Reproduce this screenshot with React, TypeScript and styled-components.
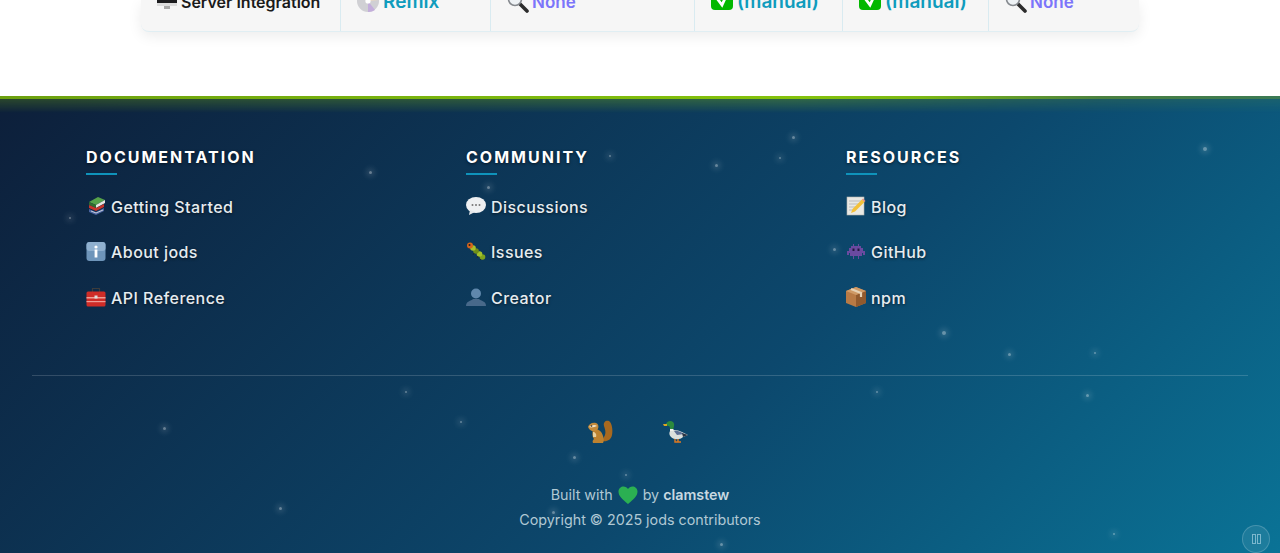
import React from "react";
import styled, { createGlobalStyle } from "styled-components";

const Global = createGlobalStyle`
  html, body { margin: 0; padding: 0; background: #fff; overflow: hidden; height: 553px; }
  body { font-family: Inter, "Liberation Sans", sans-serif; }
`;
const Page = styled.div`height: 553px; overflow: hidden; display: flex; flex-direction: column;`;
const TopArea = styled.div`height: 96px; flex: none; overflow: hidden; display: flex; flex-direction: column; padding: 0 141px; box-sizing: border-box;`;
const Table = styled.div`
  height: 32px; flex: none; display: grid; grid-template-columns: 199px 150px 204px 148px 146px 151px;
  background: #f6f6f6; border-radius: 0 0 8px 8px; box-shadow: 0 4px 14px rgba(0,0,0,.08);
  border-bottom: 1px solid #e0eef3; box-sizing: border-box; width: 998px;
`;
const Cell = styled.div`
  display: flex; align-items: flex-end; gap: 3px; padding: 0 0 18px 16px; font-size: 19px; line-height: 22px; font-weight: 600;
  color: #0f9cbd; border-left: 1px solid #d9ebf1; white-space: nowrap; height: 31px; box-sizing: border-box;
  &:first-child { border-left: 0; color: #1a1a1a; font-size: 16px; }
`;
const None = styled.span`color: #7c75fa; font-size: 17px;`;
const CellIcon = styled.svg<{ $after?: number }>`flex: none; width: 22px; height: 22px; margin-right: ${p => p.$after ?? 0}px;`;

const Footer = styled.footer`
  position: relative; flex: 1; overflow: hidden; padding: 51px 32px 0;
  background: linear-gradient(135deg, #0d1f3a 0%, #0c486d 60%, #0a7396 100%);
  &::before {
    content: ""; position: absolute; left: 0; right: 0; top: 0; height: 3px; z-index: 1;
    background: linear-gradient(90deg, #6ca00f 0%, #78b20e 30%, #84c20c 62%, #7cb814 72%, #4a8040 86%, #3b7a55 100%);
  }
  &::after {
    content: ""; position: absolute; left: 0; right: 0; top: 3px; height: 14px;
    background: linear-gradient(90deg, #6ca00f 0%, #78b20e 30%, #84c20c 62%, #4a8040 86%, #3b7a55 100%);
    -webkit-mask-image: linear-gradient(180deg, rgba(0,0,0,.3), transparent);
    mask-image: linear-gradient(180deg, rgba(0,0,0,.3), transparent);
  }
`;
const Star = styled.i<{ $s: number }>`
  position: absolute; border-radius: 50%; width: ${p => p.$s}px; height: ${p => p.$s}px;
  background: rgba(255,255,255,.38); box-shadow: 0 0 6px 2px rgba(255,255,255,.2);
`;
const Columns = styled.div`position: relative; z-index: 2; display: grid; grid-template-columns: repeat(3, 380px); padding: 0 54px; height: 228px; border-bottom: 1px solid rgba(255,255,255,.16);`;
const Column = styled.div`display: flex; flex-direction: column; align-items: flex-start;`;
const Heading = styled.h3`
  margin: 0 0 9px; padding-bottom: 8px; position: relative; font-size: 16px; line-height: 20px; font-weight: 700; letter-spacing: 2px; color: #fff;
  text-shadow: 0 1px 3px rgba(0,0,0,.6);
  &::after { content: ""; position: absolute; left: 0; bottom: 0; width: 31px; height: 2px; background: #0f93bb; }
`;
const LinkRow = styled.a`
  display: flex; align-items: center; gap: 5px; height: 45.5px; font-size: 16px; font-weight: 500; letter-spacing: .45px; color: #e6ecf0; text-decoration: none; text-shadow: 0 1px 3px rgba(0,0,0,.6);
`;
const Emoji = styled.svg`flex: none; width: 20px; height: 20px; margin-top: -2px;`;
const Mascots = styled.div`position: relative; z-index: 2; display: flex; justify-content: center; gap: 50px; margin-top: 43px; padding-right: 4px;`;
const Mascot = styled.svg`width: 26px; height: 26px;`;
const Credits = styled.div`position: relative; z-index: 2; margin-top: 37px; text-align: center; font-size: 14.3px; line-height: 25px; color: #b0c8d4;`;
const Line = styled.div`display: flex; justify-content: center; align-items: center; gap: 4px;`;
const Strong = styled.span`font-weight: 600; color: #c8d9e1;`;
const Heart = styled.svg`width: 20px; height: 18px; margin: 0 1px;`;
const Pause = styled.button`
  position: absolute; right: 10px; bottom: 0; width: 28px; height: 28px; border-radius: 50%; padding: 0; display: flex; align-items: center; justify-content: center; gap: 1px; z-index: 2;
  background: rgba(255,255,255,.08); border: 1px solid rgba(255,255,255,.18); box-sizing: border-box;
`;
const PauseBar = styled.span`display: block; width: 2px; height: 8px; border: 1px solid rgba(200,232,245,.55);`;

const Computer = () => <CellIcon viewBox="0 0 22 22" $after={-1}><rect x="0" y="0" width="20" height="14" fill="#1c1c1e"/><rect x="0" y="12" width="20" height="3" fill="#dcdcdc"/><rect x="7" y="15" width="6" height="3" fill="#a8a8a8"/></CellIcon>;
const Disc = () => <CellIcon viewBox="0 0 22 22" $after={1}><circle cx="11" cy="10" r="11" fill="#d0d0d4"/><path d="M11 10 4 2a11 11 0 0 1 7-3z" fill="#b5dfcf"/><path d="M11 10 18 19a11 11 0 0 1-7 2z" fill="#c3aedb"/><path d="M11 10 18 1a11 11 0 0 1 4 8z" fill="#ecd9c0"/><circle cx="11" cy="10" r="2.600" fill="#fff"/></CellIcon>;
const Lens = () => <CellIcon viewBox="0 0 22 22"><path d="m12 12 8 8" stroke="#2c2c2c" strokeWidth="3.600" strokeLinecap="round"/><circle cx="8" cy="8" r="6.500" fill="#eef2f5" stroke="#85898e" strokeWidth="1.600"/></CellIcon>;
const Check = () => <CellIcon viewBox="0 0 22 22" $after={1}><rect x="0" y="-4" width="22" height="23" rx="4" fill="#03b800"/><path d="M5 6l6 8 6-13" fill="none" stroke="#fff" strokeWidth="2.800"/></CellIcon>;

const icons: Record<string, React.ReactNode> = {
  books: <><path d="M3 6l9-5 7 3-9 5z" fill="#56a24a"/><path d="M3 6l7 3v3L3 9z" fill="#2f6b30"/><path d="M10 9l9-5v3l-9 5z" fill="#e7e7e0"/><path d="M3 9l7 3 8-4v3l-8 4-7-3z" fill="#c7352c"/><path d="M3 13l7 3 8-4v3l-8 4-7-3z" fill="#48629f"/><path d="M5 15l5 2 7-3" stroke="#e8e8e8" fill="none" strokeWidth=".8"/></>,
  info: <><rect x="0.500" y="1" width="19" height="19" rx="3" fill="#6e95ba"/><rect x="0.500" y="1" width="19" height="9" rx="3" fill="#8fb0cf"/><circle cx="10" cy="6" r="1.600" fill="#fff"/><rect x="8.600" y="8.500" width="2.800" height="8" fill="#fff"/></>,
  toolbox: <><path d="M6.500 5V1.500h7V5" fill="none" stroke="#3c3c3c" strokeWidth="1.200"/><rect x="0.500" y="4.500" width="19" height="15" rx="1.500" fill="#cf2c27"/><rect x="0.500" y="10" width="19" height="1.500" fill="#ee9d95"/><rect x="0.500" y="14" width="19" height="1.200" fill="#ee9d95"/><rect x="8.500" y="8.500" width="3" height="3" fill="#ddd"/></>,
  chat: <><ellipse cx="10" cy="9" rx="10" ry="8" fill="#eef0f2"/><path d="M4 14l-1 5 6-3z" fill="#e3e6e9"/><circle cx="6.500" cy="9" r="1" fill="#777"/><circle cx="10" cy="9" r="1" fill="#777"/><circle cx="13.500" cy="9" r="1" fill="#777"/></>,
  bug: <><circle cx="16.500" cy="16" r="2.800" fill="#7ea31c"/><circle cx="13.500" cy="13" r="2.800" fill="#a3c12a"/><circle cx="10" cy="10" r="2.800" fill="#6f8f18"/><circle cx="7" cy="7" r="2.800" fill="#a8bf2a"/><circle cx="4" cy="4.500" r="3" fill="#d5641c"/><circle cx="3.500" cy="4" r="1" fill="#222"/><path d="M8 12l-1 2M12 15l-1 2M15 18l-1 1" stroke="#222" strokeWidth=".8"/></>,
  user: <><circle cx="10" cy="6.500" r="5" fill="#5f87ac"/><path d="M0 19c0-5 5-5 7-7h6c2 2 7 2 7 7z" fill="#48698a"/></>,
  memo: <><rect x="1" y="1" width="17" height="18" fill="#e9e9e4" stroke="#b5b5b0" strokeWidth=".6"/><path d="M3 5h13M3 8h13M3 11h8M3 14h5" stroke="#bbb"/><path d="M5 17l1.500-4L16 3.500l2.500 2.500L9 15.500z" fill="#f3c13a"/><path d="M16 3.500l1-1 2.500 2.500-1 1z" fill="#e48a80"/></>,
  invader: <><path d="M3 7h2V5h2V3h1v2h4V3h1v2h2v2h2v3h2v4h-2v-2h-1v3h-3v3h-1v-3H8v3H7v-3H4v-3H3v2H1v-4h2z" fill="#6a4aa0"/><rect x="6.500" y="7.500" width="2" height="2.500" fill="#241840"/><rect x="11.500" y="7.500" width="2" height="2.500" fill="#241840"/></>,
  box: <><path d="M10 0l10 4v12l-10 4-10-4V4z" fill="#b87a45"/><path d="M10 8l10-4v12l-10 4z" fill="#915a2e"/><path d="M0 4l10-4 10 4-10 4z" fill="#cf9a66"/><path d="M5 2l10 4v4" stroke="#e6d2b5" strokeWidth="2.200" fill="none"/></>,
};
const Icon = ({ name }: { name: string }) => <Emoji viewBox="0 0 20 20">{icons[name]}</Emoji>;

const stars: [number, number, number][] = [[793,137,3],[1205,149,4],[370,172,3],[610,156,2],[716,165,3],[780,158,2],[488,187,3],[70,218,2],[834,249,3],[944,333,4],[1009,354,3],[1095,353,2],[406,392,2],[877,392,2],[1087,395,3],[164,428,3],[461,422,2],[574,457,3],[626,475,2],[553,512,3],[280,508,3],[721,544,3],[1114,534,2]];

const data = [
  { title: "DOCUMENTATION", links: [["books","Getting Started"],["info","About jods"],["toolbox","API Reference"]] },
  { title: "COMMUNITY", links: [["chat","Discussions"],["bug","Issues"],["user","Creator"]] },
  { title: "RESOURCES", links: [["memo","Blog"],["invader","GitHub"],["box","npm"]] },
];

export default function App() {
  return (
    <Page>
      <Global />
      <TopArea>
        <Table>
          <Cell><Computer />Server Integration</Cell>
          <Cell><Disc />Remix</Cell>
          <Cell><Lens /><None>None</None></Cell>
          <Cell><Check />(manual)</Cell>
          <Cell><Check />(manual)</Cell>
          <Cell><Lens /><None>None</None></Cell>
        </Table>
      </TopArea>
      <Footer>
        {stars.map(([x, y, s]) => <Star key={x} $s={s} style={{ left: x - s / 2, top: y - 96 - s / 2 }} />)}
        <Columns>
          {data.map(c => (
            <Column key={c.title}>
              <Heading>{c.title}</Heading>
              {c.links.map(([i, t]) => <LinkRow key={t} href="#"><Icon name={i} />{t}</LinkRow>)}
            </Column>
          ))}
        </Columns>
        <Mascots>
          <Mascot viewBox="0 0 26 26"><path d="M15 22c5 1 9-1 10-6 1-5 0-12-3-14-3-1-6 1-5 5 1 3 2 6 1 9z" fill="#a8691f"/><path d="M6 10c4-1 9 2 10 7 1 3 1 5 0 7H6c-1-2 0-3 1-4-2-2-2-6-1-10z" fill="#bd8230"/><path d="M1 8c1-3 4-5 8-4 3 1 3 5 1 7-2 2-7 2-9-3z" fill="#c48a3a"/><path d="M2 8c2-2 6-3 8-1-2 1-6 2-8 1z" fill="#f3e2c2"/><path d="M6 13c2 0 4 2 3 5H6z" fill="#e8cf9e"/><circle cx="4.500" cy="7" r=".8" fill="#222"/></Mascot>
          <Mascot viewBox="0 0 26 26"><path d="M7 12c3-2 8-1 12 1l6 3-5 2c-3 3-9 3-12 0-2-2-2-4-1-6z" fill="#dde0dd"/><path d="M11 12c3-1 7 1 10 3l-7 1z" fill="#5d7096"/><path d="M19 14l6 2-5 2z" fill="#2b3342"/><path d="M3 5c1-3 5-4 7-2 2 2 1 5 0 8H7c0-2 0-3-1-4-1 0-2 0-3-2z" fill="#2c8a3e"/><path d="M7 10h3.500v2H7z" fill="#f2f2ee"/><path d="M0 5h4v2H1z" fill="#d9a520"/><path d="M12 20v3h3M15 20v3h3" stroke="#e07a20" strokeWidth="1.400" fill="none"/></Mascot>
        </Mascots>
        <Credits>
          <Line>Built with <Heart viewBox="0 0 20 18"><path d="M10 18C4 13 .5 10 .5 5.500 .5 2.500 3 .5 5.500 .5 7.500 .5 9 1.500 10 3c1-1.500 2.500-2.500 4.500-2.500C17 .5 19.500 2.500 19.500 5.500 19.500 10 16 13 10 18z" fill="#2bb052"/></Heart> by <Strong>clamstew</Strong></Line>
          <div>Copyright © 2025 jods contributors</div>
        </Credits>
        <Pause aria-label="Pause"><PauseBar /><PauseBar /></Pause>
      </Footer>
    </Page>
  );
}
